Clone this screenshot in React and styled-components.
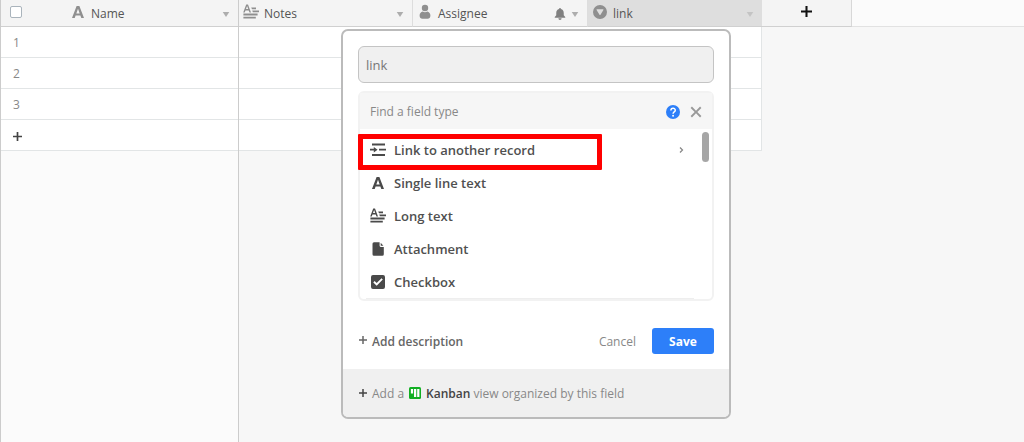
import React from "react";
import styled, { createGlobalStyle } from "styled-components";

const fieldTypes = [
  { label: "Link to another record", icon: "link", nested: true },
  { label: "Single line text", icon: "text" },
  { label: "Long text", icon: "longText" },
  { label: "Attachment", icon: "file" },
  { label: "Checkbox", icon: "check" },
];

const rows = [1, 2, 3];

export default function App() {
  return (
    <>
      <GlobalStyle />
      <S.Page>
        <S.FrozenPane>
          <S.Table>
            <thead>
              <tr>
                <S.NumberHead>
                  <S.Checkbox type="checkbox" aria-label="Select all rows" />
                </S.NumberHead>
                <S.Head>
                  <HeadContent icon="text" label="Name" />
                </S.Head>
              </tr>
            </thead>
            <tbody>
              {rows.map((row) => (
                <tr key={row}>
                  <S.NumberCell>{row}</S.NumberCell>
                  <S.Cell />
                </tr>
              ))}
              <tr>
                <S.NumberCell>
                  <S.IconButton aria-label="Add record">
                    <Icon name="plus" size={9} color="#444" />
                  </S.IconButton>
                </S.NumberCell>
                <S.Cell />
              </tr>
            </tbody>
          </S.Table>
        </S.FrozenPane>

        <S.ScrollPane>
          <S.HeadStrip>
            <S.Table $width={523}>
              <thead>
                <tr>
                  <S.Head $width={173}>
                    <HeadContent icon="longText" label="Notes" />
                  </S.Head>
                  <S.Head $width={175}>
                    <HeadContent icon="person" label="Assignee" bell />
                  </S.Head>
                  <S.Head $width={175} $active>
                    <HeadContent icon="select" label="link" faded />
                  </S.Head>
                </tr>
              </thead>
              <tbody>
                {[...rows, "add"].map((row) => (
                  <tr key={row}>
                    <S.Cell />
                    <S.Cell />
                    <S.Cell $last />
                  </tr>
                ))}
              </tbody>
            </S.Table>
            <S.AddField aria-label="Add field">
              <Icon name="plus" size={11} color="#111" />
            </S.AddField>
            <S.HeadRest />
          </S.HeadStrip>
          <FieldEditor />
        </S.ScrollPane>
      </S.Page>
    </>
  );
}

const HeadContent = ({ icon, label, bell, faded }) => (
  <S.HeadInner>
    <Icon name={icon} size={16} color="#8f8f8f" />
    <S.HeadLabel>{label}</S.HeadLabel>
    {bell && <Icon name="bell" size={12} color="#808080" />}
    <Icon name="caret" size={8} color={faded ? "#c4c4c4" : "#adadad"} />
  </S.HeadInner>
);

const FieldEditor = () => (
  <S.Editor>
    <S.EditorBody>
      <S.NameInput defaultValue="link" aria-label="Field name" />
      <S.Picker>
        <S.SearchBar>
          <S.SearchInput
            placeholder="Find a field type"
            aria-label="Find a field type"
          />
          <S.IconButton aria-label="Help">
            <Icon name="help" size={14} color="#2d7ff9" />
          </S.IconButton>
          <S.IconButton aria-label="Close">
            <Icon name="close" size={12} color="#999" />
          </S.IconButton>
        </S.SearchBar>
        <S.Options>
          {fieldTypes.map(({ label, icon, nested }) => (
            <S.Option key={label}>
              <Icon name={icon} size={16} color="#4a4a4a" />
              <S.OptionLabel>{label}</S.OptionLabel>
              {nested && <Icon name="chevron" size={8} color="#888" />}
            </S.Option>
          ))}
          <S.Divider />
        </S.Options>
        <S.ScrollThumb />
        <S.Highlight />
      </S.Picker>
      <S.Actions>
        <S.AddDescription>
          <Icon name="plus" size={8} color="#666" />
          Add description
        </S.AddDescription>
        <S.Cancel>Cancel</S.Cancel>
        <S.Save>Save</S.Save>
      </S.Actions>
    </S.EditorBody>
    <S.Suggestion>
      <Icon name="plus" size={8} color="#444" />
      <span>Add a</span>
      <Icon name="kanban" size={12} color="#11af22" />
      <span>
        <b>Kanban</b> view organized by this field
      </span>
    </S.Suggestion>
  </S.Editor>
);

const Icon = ({ name, size, color }) => (
  <S.Svg
    width={size}
    height={size}
    viewBox="0 0 16 16"
    fill={color}
    aria-hidden="true"
  >
    {icons[name]}
  </S.Svg>
);

const icons = {
  text: (
    <path
      fillRule="evenodd"
      d="M6.6 2h2.8L14 14h-2.7l-.9-2.6H5.6L4.7 14H2zM8 4.7 6.3 9.4h3.4z"
    />
  ),
  longText: (
    <>
      <path
        fillRule="evenodd"
        d="M3.2.5h1.800l3 8H6.500l-.8-2.100H2.500l-.8 2.100H.2zM4.100 2.100 3 5.100h2.200z"
      />
      <path d="M8.200 3.400h4.800v1.900H9zM9.200 6.400H16v1.900H9.900zM.4 9.600h14.200v1.900H.4zM.4 12.700h12.400v1.900H.4z" />
    </>
  ),
  person: (
    <>
      <circle cx="8" cy="4" r="3.2" />
      <path d="M5.8 7.6c1.3.9 3.1.9 4.4 0 2 .6 3.2 2 3.2 4 0 2.3-1.2 3.2-2.8 3.2H5.4c-1.6 0-2.8-.9-2.8-3.2 0-2 1.2-3.4 3.2-4z" />
    </>
  ),
  select: (
    <path
      fillRule="evenodd"
      d="M8 1a7 7 0 1 0 0 14A7 7 0 0 0 8 1zM5 5.200h6q.8 0 .4.800L8.500 10.700q-.5.600-1 0L4.600 6q-.4-.8.400-.8z"
    />
  ),
  bell: (
    <path d="M8 0a1.3 1.3 0 0 1 1.3 1.3C11.8 2 13 4 13 6.500v3.200l2 2.200v1H1v-1l2-2.200V6.500C3 4 4.200 2 6.700 1.300A1.300 1.300 0 0 1 8 0zM5.800 13.800h4.400a2.200 2.200 0 0 1-4.400 0z" />
  ),
  caret: <path d="M1.500 4h13L8 14z" />,
  plus: <path d="M6.500 0h3v6.500H16v3H9.500V16h-3V9.500H0v-3h6.500z" />,
  link: (
    <path d="M2 1.500h13v1.900H2zM9 6.700h7v1.900H9zM2 12h13v1.900H2zM0 6.800h3.800V4.900L7.600 7.700 3.800 10.500V8.600H0z" />
  ),
  file: (
    <path
      fillRule="evenodd"
      d="M4 1.200h5.600v3.600q0 1.100 1.100 1.100h3.100v7.400q0 1.500-1.500 1.500H4q-1.500 0-1.500-1.500V2.700Q2.500 1.200 4 1.200zm6.700.5 2.700 3.100h-2.700z"
    />
  ),
  check: (
    <path
      fillRule="evenodd"
      d="M3 1h10q2 0 2 2v10q0 2-2 2H3q-2 0-2-2V3q0-2 2-2zm1.500 6.100L3.300 8.400l3.400 3.300 6.100-6.100-1.300-1.300-4.800 4.800z"
    />
  ),
  chevron: (
    <path d="M4 3l5 5-5 5" fill="none" stroke="#888" strokeWidth="2.500" />
  ),
  close: (
    <path d="m2.600.8 5.400 5.400L13.400.8l1.800 1.800L9.800 8l5.400 5.400-1.800 1.800L8 9.800l-5.400 5.400-1.800-1.800L6.200 8 .8 2.600z" />
  ),
  help: (
    <>
      <circle cx="8" cy="8" r="8" />
      <path
        d="M5.600 6.200c0-3.200 5-3.200 5-.2 0 1.900-2.500 1.900-2.500 3.900"
        fill="none"
        stroke="#fff"
        strokeWidth="1.700"
      />
      <circle cx="8.1" cy="12.3" r="1.1" fill="#fff" />
    </>
  ),
  kanban: (
    <>
      <rect width="16" height="16" rx="2" />
      <path
        d="M2.500 2.500h3v6.200h-3zM6.700 2.500h3v10.700h-3zM10.900 2.500h3v10.700h-3z"
        fill="#fff"
      />
    </>
  ),
};

const GlobalStyle = createGlobalStyle`
  * {
    box-sizing: border-box;
  }

  body {
    margin: 0;
    background: #f7f7f7;
    font-family: "Open Sans", "Noto Sans", sans-serif;
    font-size: 12px;
    line-height: 18px;
    color: #555;
  }

  button,
  input {
    margin: 0;
    padding: 0;
    border: 0;
    background: none;
    font: inherit;
    color: inherit;
  }
`;

const S = {
  Page: styled.main`
    display: flex;
    min-height: 100vh;
  `,
  FrozenPane: styled.div`
    width: 239px;
    flex: none;
    background: #fbfbfb;
    border-left: 1px solid #ccc;
    border-right: 1px solid #ccc;
  `,
  ScrollPane: styled.div`
    position: relative;
    flex: 1;
    min-width: 0;
  `,
  HeadStrip: styled.div`
    display: flex;
    align-items: flex-start;
  `,
  Table: styled.table`
    width: ${({ $width }) => ($width ? `${$width}px` : "100%")};
    flex: none;
    table-layout: fixed;
    border-collapse: separate;
    border-spacing: 0;
  `,
  Head: styled.th`
    width: ${({ $width }) => ($width ? `${$width}px` : "auto")};
    height: 27px;
    padding: 2px 8px 0 4px;
    background: ${({ $active }) => ($active ? "#dedede" : "#f4f4f4")};
    border-bottom: 1px solid #d0d0d0;
    font-weight: 400;
    text-align: left;

    & + & {
      border-left: 1px solid #ddd;
    }
  `,
  NumberHead: styled.th`
    width: 65px;
    padding: 0 0 3px 9px;
    background: #f4f4f4;
    border-bottom: 1px solid #d0d0d0;
    text-align: left;
    vertical-align: middle;
  `,
  HeadInner: styled.div`
    display: flex;
    align-items: center;
    gap: 5px;

    > svg:first-child {
      margin-bottom: 4px;
    }
  `,
  HeadLabel: styled.span`
    flex: 1;
    color: #555;
  `,
  Checkbox: styled.input`
    appearance: none;
    display: block;
    width: 12px;
    height: 12px;
    background: #fff;
    border: 1px solid #aab4bc;
    border-radius: 2px;
  `,
  Cell: styled.td`
    height: 31px;
    padding: 0;
    background: #fff;
    border-bottom: 1px solid #e2e5e6;
    border-right: ${({ $last }) => ($last ? "1px solid #e2e5e6" : 0)};
  `,
  NumberCell: styled.td`
    height: 31px;
    padding: 2px 0 0 12px;
    background: #fff;
    border-bottom: 1px solid #e2e5e6;
    color: #888;
  `,
  AddField: styled.button`
    display: grid;
    place-items: center;
    width: 90px;
    height: 27px;
    padding-bottom: 3px;
    flex: none;
    background: #f4f4f4;
    border-right: 1px solid #d8d8d8;
    border-bottom: 1px solid #d0d0d0;
  `,
  HeadRest: styled.div`
    flex: 1;
    height: 27px;
    background: #fbfbfb;
    border-bottom: 1px solid #e2e2e2;
  `,
  Svg: styled.svg`
    display: block;
    flex: none;
  `,
  IconButton: styled.button`
    display: block;
    flex: none;
  `,
  Editor: styled.section`
    position: absolute;
    top: 29px;
    left: 102px;
    width: 390px;
    overflow: hidden;
    background: #fff;
    border: 2px solid #bbb;
    border-radius: 7px;
  `,
  EditorBody: styled.div`
    padding: 15px;
  `,
  NameInput: styled.input`
    display: block;
    width: 100%;
    height: 37px;
    padding: 0 7px;
    background: #f0f0f0;
    border: 1px solid #c4c4c4;
    border-radius: 6px;
    font-size: 13px;
    color: #777;
  `,
  Picker: styled.div`
    position: relative;
    margin-top: 8px;
    border: 2px solid #f2f2f2;
    border-radius: 6px;
  `,
  SearchBar: styled.div`
    display: flex;
    align-items: center;
    gap: 10px;
    height: 36px;
    padding: 2px 10px 0;
    background: #f6f6f6;
  `,
  SearchInput: styled.input`
    flex: 1;
    min-width: 0;

    &::placeholder {
      color: #888;
      opacity: 1;
    }
  `,
  Options: styled.div`
    display: flex;
    flex-direction: column;
    padding-top: 4px;
  `,
  Option: styled.button`
    display: flex;
    align-items: center;
    gap: 8px;
    height: 33px;
    padding: 0 26px 0 10px;
    text-align: left;
  `,
  OptionLabel: styled.span`
    flex: 1;
    font-size: 13px;
    font-weight: 600;
    color: #505050;
  `,
  Divider: styled.div`
    height: 1px;
    margin: 0 18px 0 6px;
    background: #eee;
  `,
  ScrollThumb: styled.div`
    position: absolute;
    top: 39px;
    right: 3px;
    width: 7px;
    height: 30px;
    background: #a6a6a6;
    border-radius: 4px;
  `,
  Highlight: styled.div`
    position: absolute;
    top: 41px;
    left: -2px;
    width: 244px;
    height: 36px;
    border: 5px solid #f00;
    border-radius: 1px;
    pointer-events: none;
  `,
  Actions: styled.div`
    display: flex;
    align-items: center;
    gap: 16px;
    margin-top: 27px;
  `,
  AddDescription: styled.button`
    display: flex;
    align-items: center;
    gap: 5px;
    margin-right: auto;
    padding: 2px 0 0 1px;
    font-weight: 600;
    color: #666;

    svg {
      margin-bottom: 4px;
    }
  `,
  Cancel: styled.button`
    padding-top: 2px;
    color: #888;
  `,
  Save: styled.button`
    width: 62px;
    height: 26px;
    padding-top: 1px;
    background: #2d7ff9;
    border-radius: 3px;
    font-weight: 700;
    color: #fff;
  `,
  Suggestion: styled.footer`
    display: flex;
    align-items: center;
    gap: 5px;
    height: 48px;
    padding: 2px 16px 0;
    background: #f0f0f0;
    color: #888;

    svg {
      margin-bottom: 3px;
    }

    b {
      font-weight: 600;
      color: #444;
    }
  `,
};
